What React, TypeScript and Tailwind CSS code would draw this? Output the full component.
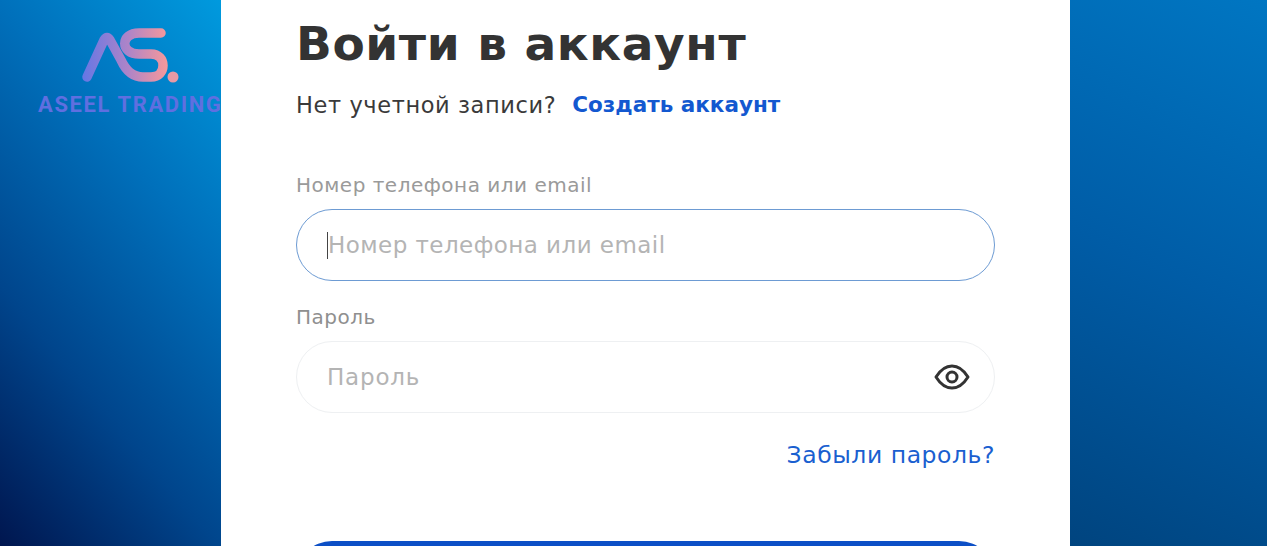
const font = { fontFamily: '"DejaVu Sans", sans-serif' };

function Logo() {
  return (
    <svg width="110" height="62" viewBox="0 0 110 62" className="ml-[75px] shrink-0">
      <defs>
        <linearGradient id="asg" gradientUnits="userSpaceOnUse" x1="5" y1="0" x2="92" y2="0">
          <stop offset="0" stopColor="#6176e6" />
          <stop offset="0.55" stopColor="#ad84c8" />
          <stop offset="1" stopColor="#f6989b" />
        </linearGradient>
      </defs>
      <path
        d="M12 52 L29 15 Q32 10 35 15 L46 35 C51 46 58 52 68 52 L76 52 C92 52 92 29 76 29 L64 29 C45 29 45 8 64 8 L86 8"
        fill="none"
        stroke="url(#asg)"
        strokeWidth="9.500"
        strokeLinecap="round"
        strokeLinejoin="round"
      />
      <circle cx="98" cy="52" r="5.500" fill="#e79aa5" />
    </svg>
  );
}

export default function App() {
  return (
    <div className="flex w-[1267px] h-[546px] overflow-hidden" style={font}>
      <aside className="w-[221px] shrink-0 h-full pt-[25px] overflow-hidden bg-[linear-gradient(50deg,#00164f_0%,#00458c_32%,#0070bb_67%,#009ade_100%)] flex flex-col">
        <Logo />
        <div
          className="ml-[38px] mt-[6px] text-[22px] leading-[24px] font-bold tracking-[1.6px] whitespace-nowrap text-[#5f6fe0]"
          style={{ fontFamily: 'Roboto, sans-serif' }}
        >
          ASEEL TRADING
        </div>
      </aside>

      <main className="w-[849px] shrink-0 h-full bg-white px-[75px] flex flex-col">
        <h1 className="shrink-0 text-[47px] leading-[56px] tracking-[0.6px] font-bold text-[#333333] mt-[16px] whitespace-nowrap">Войти в аккаунт</h1>
        <p className="shrink-0 mt-[19px] text-[22.500px] leading-[28px] tracking-[0.6px] text-[#3a3a3a] flex gap-[16px] whitespace-nowrap">
          <span>Нет учетной записи?</span>
          <a className="text-[#1358d0] font-bold text-[21.500px] tracking-normal">Создать аккаунт</a>
        </p>

        <label className="shrink-0 mt-[54px] text-[20px] leading-[24px] tracking-[0.5px] text-[#9a9a9a]">Номер телефона или email</label>
        <div className="shrink-0 mt-[12px] h-[72px] rounded-full border border-[#6d9bd3] flex items-center pl-[30px] text-[23px] tracking-[0.45px] text-[#b4b4b4]">
          <span className="w-px h-[27px] bg-[#444444]" />
          <span>Номер телефона или email</span>
        </div>

        <label className="shrink-0 mt-[24px] text-[20px] leading-[24px] tracking-[0.5px] text-[#8f8f8f]">Пароль</label>
        <div className="shrink-0 mt-[12px] h-[72px] rounded-full border border-[#eef0f2] flex items-center justify-between pl-[30px] pr-[24px] text-[23px] tracking-[0.8px] text-[#b4b4b4]">
          <span>Пароль</span>
          <svg width="36" height="26" viewBox="0 0 36 26" fill="none" stroke="#333333" strokeWidth="3">
            <path d="M2 13 C7 5 12 2 18 2 C24 2 29 5 34 13 C29 21 24 24 18 24 C12 24 7 21 2 13 Z" strokeLinejoin="round" />
            <circle cx="18" cy="13" r="5" />
          </svg>
        </div>

        <a className="shrink-0 mt-[27px] self-end text-[23.500px] leading-[30px] tracking-[0.55px] text-[#1a5fd0]">Забыли пароль?</a>

        <div className="shrink-0 mt-[71px] h-[72px] rounded-full bg-[#0c4fc6]" />
      </main>

      <aside className="flex-1 h-full bg-[linear-gradient(25deg,#00447f_0%,#005ca6_50%,#0076c2_100%)]" />
    </div>
  );
}
